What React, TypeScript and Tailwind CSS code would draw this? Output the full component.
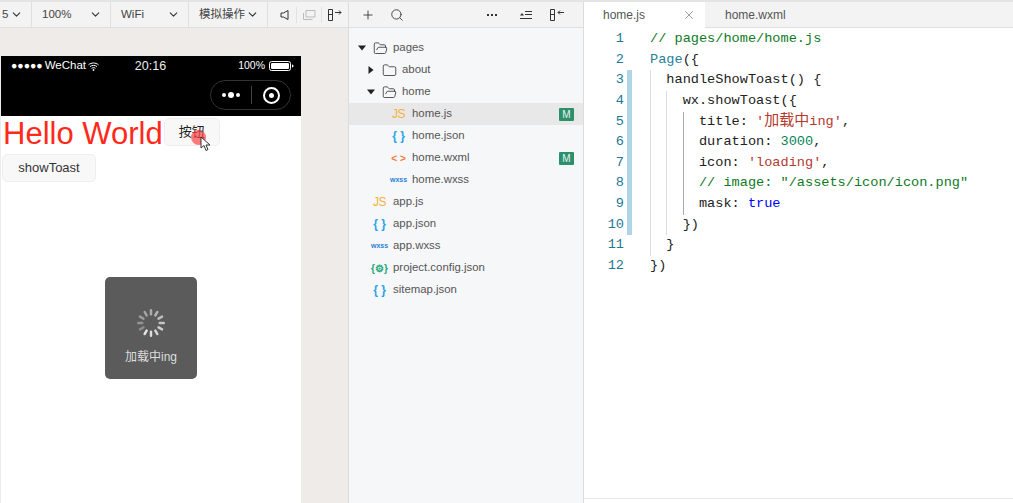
import { ChevronDown, Folder, FolderOpen, Plus, Search, X } from 'lucide-react';
import type { ReactNode } from 'react';

const cjkSans = "font-['Liberation_Sans','Noto_Sans_CJK_SC',sans-serif]";

function ToolCell({ label, width }: { label: string; width: string }) {
  return (
    <div className={`${width} flex h-full shrink-0 items-center justify-between border-r border-[#dfdfdf] pl-[10px] pr-[8px]`}>
      <span className="whitespace-nowrap text-[11.5px] text-[#444]">{label}</span>
      <ChevronDown size={13} strokeWidth={2} className="text-[#333]" />
    </div>
  );
}

function Battery() {
  return (
    <svg width="25" height="10" viewBox="0 0 25 10">
      <rect x="0.5" y="0.5" width="21" height="9" rx="2" fill="none" stroke="#fff" />
      <rect x="2" y="2" width="18" height="6" rx="1" fill="#fff" />
      <path d="M23 3.5c1 .2 1.5.8 1.5 1.5s-.5 1.3-1.5 1.5z" fill="#fff" />
    </svg>
  );
}

function Wifi() {
  return (
    <svg width="11" height="9" viewBox="0 0 11 9" fill="none" stroke="#fff" strokeWidth="1">
      <path d="M.5 2.800c3-2.400 7-2.400 10 0M2 4.600c2-1.600 5-1.600 7 0M3.500 6.300c1.200-.8 2.800-.8 4 0" />
      <circle cx="5.500" cy="8" r=".6" fill="#fff" />
    </svg>
  );
}

function Spinner() {
  const bars = Array.from({ length: 12 }, (_, i) => i);
  return (
    <svg width="30" height="30" viewBox="0 0 30 30">
      {bars.map((i) => (
        <rect
          key={i}
          x="13.800"
          y="1"
          width="2.400"
          height="6.500"
          rx="1.200"
          fill="#fff"
          opacity={0.3 + (((i + 4) % 12) / 12) * 0.6}
          transform={`rotate(${i * 30} 15 15)`}
        />
      ))}
    </svg>
  );
}

function Simulator() {
  return (
    <div className="flex h-full w-[349px] shrink-0 flex-col border-r border-[#dcdcdc] bg-[#eeebe9]">
      <div className="flex h-[26px] shrink-0 items-center border-b border-[#dfdfdf] bg-[#f3f3f3]">
        <ToolCell label="5" width="w-[32px] !pl-[2px]" />
        <ToolCell label="100%" width="w-[79px]" />
        <ToolCell label="WiFi" width="w-[78px]" />
        <ToolCell label="模拟操作" width="w-[79px]" />
        <div className="flex items-center pl-[12px]">
          <svg width="12" height="12" viewBox="0 0 12 12" fill="none" stroke="#333">
            <path d="M1 4h2.500L8 1.500v9L3.500 8H1z" />
          </svg>
          <span className="ml-[4px] h-[16px] w-px bg-[#e2e2e2]" />
          <svg width="14" height="12" viewBox="0 0 14 12" fill="none" stroke="#bbb" className="ml-[5px]">
            <path d="M4 1.500h9v6.500H4zM1.500 4v6.500h9" />
          </svg>
          <span className="ml-[5px] h-[16px] w-px bg-[#e2e2e2]" />
          <svg width="16" height="12" viewBox="0 0 16 12" fill="none" stroke="#333" className="ml-[5px]">
            <path d="M1.500 .5h4v11h-4zM1.500 5.500h4M8 3.500h6M12 1.500l2 2-2 2" />
          </svg>
        </div>
      </div>

      <div className="flex-1 pl-px pt-[28px]">
        <div className="relative flex h-[447px] w-[300px] flex-col bg-white">
          <div className="h-[60px] shrink-0 bg-black pl-[10px] pr-[7px] text-white">
            <div className="flex h-[20px] items-center justify-between text-[11.500px]">
              <div className="flex w-[101px] items-center gap-[2px]">
                <span className="text-[10.500px]">●●●●●</span>
                <span>WeChat</span>
                <Wifi />
              </div>
              <span className="text-[12.500px] text-[#eee]">20:16</span>
              <div className="flex w-[105px] items-center justify-end gap-[4px]">
                <span className="text-[10.500px]">100%</span>
                <Battery />
              </div>
            </div>
            <div className="mr-[3px] mt-[4px] flex justify-end">
              <div className="flex h-[30px] w-[81px] items-center rounded-full border border-[#333]">
                <div className="flex w-[40px] items-center justify-center gap-[2px]">
                  <span className="size-[4px] rounded-full bg-white" />
                  <span className="size-[6px] rounded-full bg-white" />
                  <span className="size-[4px] rounded-full bg-white" />
                </div>
                <div className="h-[18px] w-px bg-[#444]" />
                <div className="flex flex-1 items-center justify-center">
                  <div className="flex size-[17px] items-center justify-center rounded-full border-[2.500px] border-white">
                    <span className="size-[5px] rounded-full bg-white" />
                  </div>
                </div>
              </div>
            </div>
          </div>

          <div className="flex h-[30px] items-start pl-[2px] pt-[2px]">
            <span className="mt-[2px] text-[31px] leading-[28px] text-[#ff2a1a]">Hello World</span>
            <div className="relative ml-[1px] flex h-[28px] w-[56px] items-center justify-center rounded-[5px] border border-[#eee] bg-[#f8f8f8] text-[13px] text-[#222]">
              按钮
            </div>
          </div>
          <div className="ml-px mt-[8px] flex h-[28px] w-[94px] items-center justify-center rounded-[5px] border border-[#eee] bg-[#f8f8f8] text-[13px] text-[#333]">
            showToast
          </div>

          {/* click marker */}
          <span className="absolute left-[190px] top-[74px] size-[15px] rounded-full bg-[#f44]/70" />
          <svg width="12" height="16" viewBox="0 0 12 16" className="absolute left-[199px] top-[80px]">
            <path d="M1 1v11l3-2.500 2 5 2-1-2-4.500h4z" fill="#fff" stroke="#333" />
          </svg>

          {/* toast */}
          <div className="absolute left-[104px] top-[221px] flex h-[102px] w-[92px] flex-col items-center rounded-[5px] bg-[#5b5b5b] pt-[31px]">
            <Spinner />
            <span className="mt-[10px] text-[12px] text-[#ddd]">加载中ing</span>
          </div>
        </div>
      </div>
    </div>
  );
}

type FileKind = 'js' | 'json' | 'wxml' | 'wxss' | 'config';

function FileIcon({ kind }: { kind: FileKind }) {
  if (kind === 'js') return <span className="text-[12px] tracking-[-0.5px] text-[#f5b23d]">JS</span>;
  if (kind === 'json') return <span className="text-[12px] font-bold text-[#2ba3e8]">{'{ }'}</span>;
  if (kind === 'wxml') return <span className="text-[10px] font-bold text-[#ef7b3a]">{'< >'}</span>;
  if (kind === 'wxss') return <span className="text-[7px] font-bold text-[#2c7fd4]">wxss</span>;
  return <span className="whitespace-nowrap text-[10px] font-bold text-[#1fa67a]">{'{⚙}'}</span>;
}

function FileRow({ name, kind, indent, active, modified }: { name: string; kind: FileKind; indent: string; active?: boolean; modified?: boolean }) {
  return (
    <div className={`flex h-[22px] items-center pr-[9px] ${indent} ${active ? 'bg-[#e8e8e8]' : ''}`}>
      <span className="flex w-[19px] shrink-0 justify-center">
        <FileIcon kind={kind} />
      </span>
      <span className="ml-[4px] flex-1 text-[11.400px] text-[#555]">{name}</span>
      {modified && (
        <span className="flex h-[13px] w-[15px] items-center justify-center rounded-[1px] bg-[#2d8f6c] text-[10px] text-[#e8f5ef]">M</span>
      )}
    </div>
  );
}

function FolderRow({ name, open, indent }: { name: string; open?: boolean; indent: string }) {
  const Icon = open ? FolderOpen : Folder;
  return (
    <div className={`flex h-[22px] items-center ${indent}`}>
      <svg width="8" height="8" viewBox="0 0 8 8" className="shrink-0">
        <path d={open ? 'M0 1.500h8L4 6.500z' : 'M1.500 0v8L6.500 4z'} fill="#222" />
      </svg>
      <Icon size={15} strokeWidth={1.2} className="ml-[7px] shrink-0 text-[#222]" />
      <span className="ml-[5px] text-[11.400px] text-[#555]">{name}</span>
    </div>
  );
}

function FileTree() {
  return (
    <div className="flex h-full w-[235px] shrink-0 flex-col border-r border-[#dcdcdc] bg-[#f6f7f9]">
      <div className="flex h-[26px] shrink-0 items-center border-b border-[#dfdfdf] bg-[#f3f3f3] pl-[12px] pr-[18px] text-[#333]">
        <Plus size={14} strokeWidth={1.500} />
        <Search size={14} strokeWidth={1.500} className="ml-[15px]" />
        <div className="ml-auto flex items-center gap-[2px]">
          <span className="size-[2px] bg-[#333]" />
          <span className="size-[2px] bg-[#333]" />
          <span className="size-[2px] bg-[#333]" />
        </div>
        <svg width="12" height="10" viewBox="0 0 12 10" fill="none" stroke="#333" className="ml-[23px]">
          <path d="M5 1.500h7M5 4.500h7M0 8.500h12" />
          <path d="M0 5.500l2-2.500 2 2.500z" fill="#333" stroke="none" />
        </svg>
        <svg width="15" height="12" viewBox="0 0 15 12" fill="none" stroke="#333" className="ml-[18px]">
          <path d="M.5 .5h4v11h-4zM.5 5.500h4M14 3.500h-6M10 1.500l-2 2 2 2" />
        </svg>
      </div>
      <div className="pt-[9px]">
        <FolderRow name="pages" open indent="pl-[9px]" />
        <FolderRow name="about" indent="pl-[18px]" />
        <FolderRow name="home" open indent="pl-[18px]" />
        <FileRow name="home.js" kind="js" indent="pl-[40px]" active modified />
        <FileRow name="home.json" kind="json" indent="pl-[40px]" />
        <FileRow name="home.wxml" kind="wxml" indent="pl-[40px]" modified />
        <FileRow name="home.wxss" kind="wxss" indent="pl-[40px]" />
        <FileRow name="app.js" kind="js" indent="pl-[21px]" />
        <FileRow name="app.json" kind="json" indent="pl-[21px]" />
        <FileRow name="app.wxss" kind="wxss" indent="pl-[21px]" />
        <FileRow name="project.config.json" kind="config" indent="pl-[21px]" />
        <FileRow name="sitemap.json" kind="json" indent="pl-[21px]" />
      </div>
    </div>
  );
}

const Cm = ({ children }: { children: ReactNode }) => <span className="text-[#0f7a1f]">{children}</span>;
const Str = ({ children }: { children: ReactNode }) => <span className="text-[#b5392f]">{children}</span>;

const lines: { indent: number; changed?: boolean; code: ReactNode }[] = [
  { indent: 0, code: <Cm>// pages/home/home.js</Cm> },
  { indent: 0, code: <><span className="text-[#267f99]">Page</span>{'({'}</> },
  { indent: 1, changed: true, code: 'handleShowToast() {' },
  { indent: 2, changed: true, code: 'wx.showToast({' },
  { indent: 3, changed: true, code: <>title: <Str>'<span className="text-[15px]">加载中</span>ing'</Str>,</> },
  { indent: 3, changed: true, code: <>duration: <span className="text-[#098658]">3000</span>,</> },
  { indent: 3, changed: true, code: <>icon: <Str>'loading'</Str>,</> },
  { indent: 3, changed: true, code: <Cm>// image: "/assets/icon/icon.png"</Cm> },
  { indent: 3, changed: true, code: <>mask: <span className="text-[#0000ff]">true</span></> },
  { indent: 2, changed: true, code: '})' },
  { indent: 1, code: '}' },
  { indent: 0, code: '})' },
];

function Editor() {
  return (
    <div className="flex h-full min-w-0 flex-1 flex-col bg-white">
      <div className="flex h-[26px] shrink-0 items-stretch bg-[#f3f3f3] text-[12px] text-[#555]">
        <div className="flex w-[121px] items-center justify-between bg-white pl-[19px] pr-[9px]">
          <span>home.js</span>
          <X size={14} strokeWidth={1.200} className="text-[#777]" />
        </div>
        <div className="flex flex-1 items-center border-b border-[#dfdfdf] pl-[20px]">home.wxml</div>
      </div>
      <div className="flex-1 pt-[1px] font-['Liberation_Mono','Noto_Sans_CJK_SC',monospace] text-[13.600px] leading-[20.640px] text-[#222]">
        {lines.map((line, i) => (
          <div key={i} className="flex h-[20.640px]">
            <span className="w-[40px] shrink-0 text-right text-[#237893]">{i + 1}</span>
            <span className={`ml-[3px] w-[5px] shrink-0 ${line.changed ? 'bg-[#b0d4e8]' : ''}`} />
            <span className="w-[18px] shrink-0" />
            <div className="flex whitespace-pre">
              {Array.from({ length: line.indent }, (_, n) => (
                <span key={n} className={`h-full w-[16.320px] border-l ${line.indent - 1 === n && line.indent === 3 ? 'border-[#aaa]' : 'border-[#ddd]'}`} />
              ))}
              <span>{line.code}</span>
            </div>
          </div>
        ))}
      </div>
      <div className="h-[5px] shrink-0 border-t border-[#e8e8e8]" />
    </div>
  );
}

export default function App() {
  return (
    <div className={`flex h-[503px] w-[1013px] flex-col overflow-hidden bg-white ${cjkSans}`}>
      <div className="h-[2px] shrink-0 bg-[#e4e4e4]" />
      <div className="flex min-h-0 flex-1">
        <Simulator />
        <FileTree />
        <Editor />
      </div>
    </div>
  );
}
